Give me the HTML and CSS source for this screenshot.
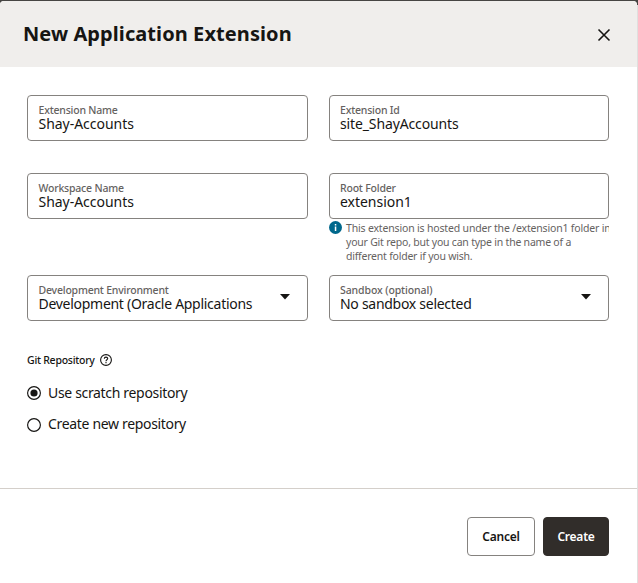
FILE: index.html
```html
<!DOCTYPE html>
<html lang="en">
<head>
<meta charset="utf-8">
<title>New Application Extension</title>
<link rel="stylesheet" href="styles.css">
</head>
<body>
<main class="dialog">
  <header class="header">
    <h1 class="title">New Application Extension</h1>
    <svg class="close" width="14" height="14" viewBox="0 0 14 14"><path d="M1.5 1.5 12.5 12.5M12.5 1.5 1.5 12.5"/></svg>
  </header>
  <form class="form">
    <div class="field">
      <span class="label">Extension Name</span>
      <span class="value">Shay-Accounts</span>
    </div>
    <div class="field right">
      <span class="label">Extension Id</span>
      <span class="value site">site_ShayAccounts</span>
    </div>
    <div class="field">
      <span class="label">Workspace Name</span>
      <span class="value">Shay-Accounts</span>
    </div>
    <div class="cell">
      <div class="field right">
        <span class="label">Root Folder</span>
        <span class="value">extension1</span>
      </div>
      <div class="hint">
        <svg class="info" width="13" height="13" viewBox="0 0 13 13"><circle cx="6.5" cy="6.5" r="6.5" fill="#00688c"/><path d="M5.8 3h1.5v1.4H5.8zM5.8 5.4h1.5V10H5.8z" fill="#fff"/></svg>
        <p class="hint-text"><span class="first">This extension is hosted under the /extension1 folder in</span><br>your Git repo, but you can type in the name of a<br>different folder if you wish.</p>
      </div>
    </div>
    <div class="field">
      <span class="label">Development Environment</span>
      <span class="value tight">Development (Oracle Applications</span>
      <svg class="arrow" width="10" height="6" viewBox="0 0 10 6"><path d="M0 0h10L5 5.5z"/></svg>
    </div>
    <div class="field right">
      <span class="label sandbox">Sandbox (optional)</span>
      <span class="value tight">No sandbox selected</span>
      <svg class="arrow" width="10" height="6" viewBox="0 0 10 6"><path d="M0 0h10L5 5.5z"/></svg>
    </div>
  </form>
  <section class="repo">
    <div class="repo-title"><span>Git Repository</span>
      <svg width="12" height="12" viewBox="0 0 12 12" fill="none" stroke="#161513" stroke-width="1.1"><circle cx="6" cy="6" r="5.4"/><path d="M4.3 4.8C4.3 2.6 7.7 2.6 7.7 4.6 7.7 5.8 6 5.8 6 7.2M6 8.1v1.1"/></svg>
    </div>
    <div class="radio">
      <svg width="14" height="14" viewBox="0 0 14 14"><circle cx="7" cy="7" r="6.4" fill="none" stroke="#161513" stroke-width="1.15"/><circle cx="7" cy="7" r="3.6" fill="#161513"/></svg>
      <span class="choice">Use scratch repository</span>
    </div>
    <div class="radio">
      <svg width="14" height="14" viewBox="0 0 14 14"><circle cx="7" cy="7" r="6.4" fill="none" stroke="#161513" stroke-width="1.15"/></svg>
      <span class="choice raised">Create new repository</span>
    </div>
  </section>
  <footer class="footer">
    <div class="btn">Cancel</div>
    <div class="btn create">Create</div>
  </footer>
</main>
</body>
</html>
```
FILE: styles.css
```css
* { box-sizing: border-box; }
body {
  margin: 0;
  padding-top: 1px;
  height: 583px;
  overflow: hidden;
  background: linear-gradient(#474543 0 5px, #e0dfde 5px);
  font-family: "Noto Sans", "Open Sans", sans-serif;
  color: #161513;
}
.dialog {
  width: 637px;
  height: 582px;
  background: #fff;
  border-radius: 4px 4px 0 0;
  overflow: hidden;
  display: flex;
  flex-direction: column;
}
.header {
  height: 66px;
  flex: none;
  background: #f0eeec;
  padding: 2px 26px 0 23px;
  display: flex;
  align-items: center;
  justify-content: space-between;
}
.title { margin: 0 0 2px; font-size: 20px; line-height: 28px; font-weight: 700; letter-spacing: 0.08px; }
.close { fill: none; stroke: #161513; stroke-width: 1.6; }
.form {
  flex: none;
  padding: 28px 28px 0 27px;
  display: grid;
  grid-template-columns: 281px 280px;
  column-gap: 21px;
  grid-template-rows: 46px 70px 46px;
  row-gap: 32px;
  align-items: start;
}
.field {
  position: relative;
  height: 46px;
  border: 1px solid #85827f;
  border-radius: 4px;
  padding: 8px 10.5px 0;
  display: flex;
  flex-direction: column;
  white-space: nowrap;
}
.right { padding-left: 10px; }
.label { font-size: 10.5px; line-height: 13px; font-weight: 500; color: #65625f; letter-spacing: -0.2px; }
.sandbox { letter-spacing: -0.1px; }
.value { font-size: 14px; line-height: 14px; letter-spacing: -0.03px; }
.site { letter-spacing: -0.13px; }
.tight { letter-spacing: -0.28px; }
.arrow { position: absolute; right: 17px; top: 18px; fill: #161513; }
.hint { display: flex; gap: 4px; padding-top: 2px; overflow: hidden; }
.info { flex: none; }
.hint-text {
  margin: 0;
  font-size: 10.5px;
  line-height: 14px;
  letter-spacing: -0.22px;
  color: #65625f;
  white-space: nowrap;
}
.first { letter-spacing: -0.17px; }
.repo { flex: 1; padding: 31px 27px 0; }
.repo-title {
  display: flex;
  align-items: center;
  gap: 5px;
  height: 16px;
  font-size: 10.5px;
  font-weight: 500;
  letter-spacing: -0.25px;
  margin-bottom: 9px;
}
.radio {
  display: flex;
  align-items: center;
  gap: 7px;
  height: 32px;
  font-size: 14px;
  letter-spacing: -0.33px;
}
.choice { margin-bottom: 2px; }
.raised { margin-bottom: 4px; }
.footer {
  height: 95px;
  flex: none;
  border-top: 1px solid #d4cfca;
  padding: 28px 28px 0;
  display: flex;
  justify-content: flex-end;
  gap: 8px;
}
.btn {
  height: 39px;
  width: 68px;
  border: 1px solid #85827f;
  border-radius: 4px;
  display: flex;
  align-items: center;
  justify-content: center;
  font-size: 12px;
  font-weight: 600;
  letter-spacing: -0.25px;
}
.create { width: 66px; background: #312d2a; border-color: #312d2a; color: #fff; }
```
